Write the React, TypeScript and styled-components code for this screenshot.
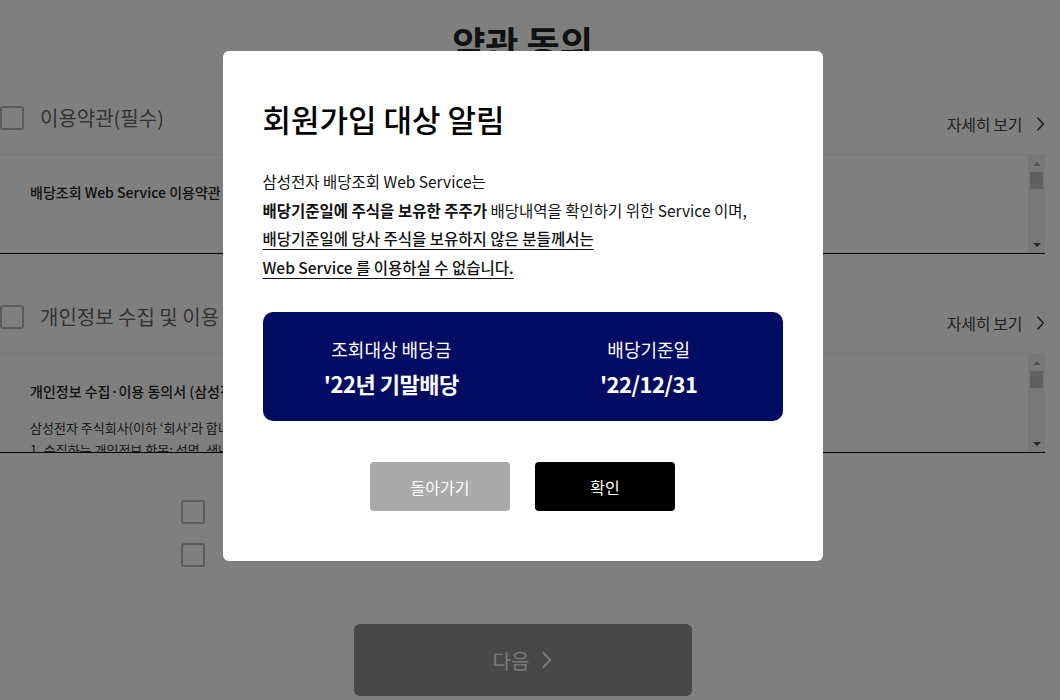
import React from 'react';
import styled, { createGlobalStyle } from 'styled-components';

const GlobalStyle = createGlobalStyle`
  html, body {
    margin: 0;
    padding: 0;
    background: #fff;
    font-family: 'Noto Sans CJK KR', 'Noto Sans', sans-serif;
    color: #222;
  }
  * {
    box-sizing: border-box;
  }
`;

const termsLines = [
  '제1조 (목적)',
  '본 약관은 삼성전자 주식회사가 제공하는 배당조회 Web Service의 이용조건 및 절차에 관한 사항을 규정합니다.',
  '제2조 (용어의 정의)',
  '본 약관에서 사용하는 용어의 정의는 다음과 같습니다.',
  '제3조 (약관의 효력 및 변경)',
  '본 약관은 서비스를 이용하고자 하는 모든 이용자에게 적용됩니다.',
];

const privacyLines = [
  '삼성전자 주식회사(이하 \u2018회사\u2019라 합니다)는 배당조회 Web Service 제공을 위하여 아래와 같이 개인정보를 수집·이용합니다.',
  '1. 수집하는 개인정보 항목: 성명, 생년월일, 휴대전화번호, 증권계좌 정보',
  '2. 개인정보의 수집·이용 목적: 주주 본인 확인 및 배당내역 조회',
  '3. 개인정보의 보유 및 이용 기간: 회원 탈퇴 시까지',
];

const ChevronRight = ({ size = 16, color = 'currentColor' }: { size?: number; color?: string }) => (
  <svg width={size * 0.55} height={size} viewBox="0 0 9 16" fill="none">
    <path d="M1.5 1.5 L7.5 8 L1.5 14.5" stroke={color} strokeWidth="1.6" />
  </svg>
);

const FakeScrollbar = () => (
  <ScrollBar>
    <ArrowButton>
      <Arrow dir="up" />
    </ArrowButton>
    <Track>
      <Thumb />
    </Track>
    <ArrowButton>
      <Arrow dir="down" />
    </ArrowButton>
  </ScrollBar>
);

const App = () => {
  return (
    <>
      <GlobalStyle />
      <Page>
        <PageTitle>약관 동의</PageTitle>

        <Sections>
          <section>
            <SectionHead>
              <HeadLeft>
                <CheckBox />
                <HeadLabel>이용약관(필수)</HeadLabel>
              </HeadLeft>
              <DetailLink>
                자세히 보기
                <ChevronRight size={16} />
              </DetailLink>
            </SectionHead>
            <ScrollBox>
              <BoxContent>
                <BoxTitle spacing={70}>배당조회 Web Service 이용약관</BoxTitle>
                {termsLines.map((line) => (
                  <BoxLine key={line}>{line}</BoxLine>
                ))}
              </BoxContent>
              <FakeScrollbar />
            </ScrollBox>
          </section>

          <section>
            <SectionHead>
              <HeadLeft>
                <CheckBox />
                <HeadLabel>개인정보 수집 및 이용 동의(필수)</HeadLabel>
              </HeadLeft>
              <DetailLink>
                자세히 보기
                <ChevronRight size={16} />
              </DetailLink>
            </SectionHead>
            <ScrollBox>
              <BoxContent>
                <BoxTitle spacing={16}>개인정보 수집·이용 동의서 (삼성전자 주식회사 배당조회 Web Service)</BoxTitle>
                {privacyLines.map((line) => (
                  <BoxLine key={line}>{line}</BoxLine>
                ))}
              </BoxContent>
              <FakeScrollbar />
            </ScrollBox>
          </section>
        </Sections>

        <AgreeList>
          <AgreeRow>
            <CheckBox />
            <AgreeText>위 약관에 모두 동의합니다.</AgreeText>
          </AgreeRow>
          <AgreeRow>
            <CheckBox />
            <AgreeText>만 14세 이상입니다.</AgreeText>
          </AgreeRow>
        </AgreeList>

        <NextButton type="button">
          다음
          <ChevronRight size={20} />
        </NextButton>
      </Page>

      <Overlay>
        <Modal>
          <ModalTitle>회원가입 대상 알림</ModalTitle>
          <ModalText>
            <p>삼성전자 배당조회 Web Service는</p>
            <p>
              <strong>배당기준일에 주식을 보유한 주주가</strong> 배당내역을 확인하기 위한 Service 이며,
            </p>
            <p>
              <Underlined>배당기준일에 당사 주식을 보유하지 않은 분들께서는</Underlined>
            </p>
            <p>
              <Underlined>Web Service 를 이용하실 수 없습니다.</Underlined>
            </p>
          </ModalText>

          <InfoCard>
            <InfoCol>
              <InfoLabel>조회대상 배당금</InfoLabel>
              <InfoValue>'22년 기말배당</InfoValue>
            </InfoCol>
            <InfoCol>
              <InfoLabel>배당기준일</InfoLabel>
              <InfoValue>'22/12/31</InfoValue>
            </InfoCol>
          </InfoCard>

          <ButtonRow>
            <ModalButton type="button" variant="cancel">
              돌아가기
            </ModalButton>
            <ModalButton type="button" variant="confirm">
              확인
            </ModalButton>
          </ButtonRow>
        </Modal>
      </Overlay>
    </>
  );
};

export default App;

const Page = styled.div`
  width: 1045px;
  padding-top: 20px;
`;

const PageTitle = styled.h1`
  margin: 0 0 42px;
  font-size: 36px;
  line-height: 44px;
  font-weight: 700;
  text-align: center;
  color: #222;
`;

const Sections = styled.div`
  display: flex;
  flex-direction: column;
  gap: 51px;
  margin-bottom: 47px;
`;

const SectionHead = styled.div`
  display: flex;
  justify-content: space-between;
  align-items: flex-start;
  height: 24px;
  margin-bottom: 24px;
`;

const HeadLeft = styled.div`
  display: flex;
  align-items: center;
  gap: 16px;
`;

const CheckBox = styled.span`
  display: block;
  flex: none;
  width: 24px;
  height: 24px;
  border: 2px solid #b6b6b6;
  border-radius: 3px;
  background: #fff;
`;

const HeadLabel = styled.span`
  font-size: 20px;
  line-height: 24px;
  color: #666;
`;

const DetailLink = styled.a`
  display: flex;
  align-items: center;
  gap: 14px;
  margin-top: 8px;
  font-size: 16px;
  line-height: 20px;
  letter-spacing: -0.3px;
  color: #444;
  cursor: pointer;
`;

const ScrollBox = styled.div`
  display: flex;
  height: 100px;
  border-top: 1px solid #f0f0f0;
  border-bottom: 1px solid #000;
  background: #fefefe;
`;

const BoxContent = styled.div`
  flex: 1;
  min-width: 0;
  overflow: hidden;
  padding: 27px 30px 0;
`;

const BoxTitle = styled.p<{ spacing: number }>`
  margin: 0 0 ${({ spacing }) => spacing}px;
  font-size: 14px;
  line-height: 20px;
  font-weight: 500;
  color: #222;
  white-space: nowrap;
`;

const BoxLine = styled.p`
  margin: 0;
  font-size: 13px;
  line-height: 22px;
  color: #333;
  white-space: nowrap;
`;

const ScrollBar = styled.div`
  display: flex;
  flex-direction: column;
  width: 17px;
  flex: none;
  background: #f1f1f1;
`;

const ArrowButton = styled.div`
  display: flex;
  align-items: center;
  justify-content: center;
  height: 17px;
  flex: none;
`;

const Arrow = styled.span<{ dir: 'up' | 'down' }>`
  width: 0;
  height: 0;
  border-left: 4px solid transparent;
  border-right: 4px solid transparent;
  ${({ dir }) =>
    dir === 'up' ? 'border-bottom: 4px solid #a3a3a3;' : 'border-top: 4px solid #505050;'}
`;

const Track = styled.div`
  flex: 1;
`;

const Thumb = styled.div`
  height: 17px;
  margin: 0 2px;
  background: #c1c1c1;
`;

const AgreeList = styled.div`
  width: 683px;
  margin: 0 auto 57px;
  display: flex;
  flex-direction: column;
  gap: 19px;
`;

const AgreeRow = styled.div`
  display: flex;
  align-items: flex-start;
  gap: 22px;
`;

const AgreeText = styled.span`
  font-size: 14px;
  line-height: 16px;
  color: #444;
`;

const NextButton = styled.button`
  display: flex;
  align-items: center;
  justify-content: center;
  gap: 12px;
  width: 338px;
  height: 72px;
  margin: 0 auto;
  border: none;
  border-radius: 6px;
  background: #909090;
  color: #f4f4f4;
  font-family: inherit;
  font-size: 20px;
`;

const Overlay = styled.div`
  position: fixed;
  inset: 0;
  display: flex;
  justify-content: center;
  align-items: flex-start;
  padding: 51px 15px 0 0;
  background: rgba(0, 0, 0, 0.5);
`;

const Modal = styled.div`
  width: 600px;
  padding: 50px 40px 50px;
  border-radius: 6px;
  background: #fff;
`;

const ModalTitle = styled.h2`
  margin: 0 0 30px;
  font-size: 31px;
  line-height: 36px;
  font-weight: 500;
  color: #000;
`;

const ModalText = styled.div`
  font-size: 15.5px;
  line-height: 28.5px;
  color: #111;

  p {
    margin: 0;
    white-space: nowrap;
  }

  strong {
    font-weight: 700;
  }
`;

const Underlined = styled.span`
  font-weight: 500;
  text-decoration: underline;
  text-decoration-thickness: 1px;
  text-underline-offset: 4px;
`;

const InfoCard = styled.div`
  display: grid;
  grid-template-columns: 1fr 1fr;
  margin-top: 31px;
  padding: 24px 5px 21px 0;
  border-radius: 10px;
  background: #020c62;
  color: #fff;
`;

const InfoCol = styled.div`
  display: flex;
  flex-direction: column;
  align-items: center;
  gap: 4px;
`;

const InfoLabel = styled.span`
  font-size: 18px;
  line-height: 26px;
`;

const InfoValue = styled.span`
  font-size: 22px;
  line-height: 34px;
  font-weight: 700;
  letter-spacing: -0.5px;
`;

const ButtonRow = styled.div`
  display: flex;
  justify-content: center;
  gap: 25px;
  margin-top: 41px;
`;

const ModalButton = styled.button<{ variant: 'cancel' | 'confirm' }>`
  width: 140px;
  height: 49px;
  border: none;
  border-radius: 4px;
  font-family: inherit;
  font-size: 16px;
  color: #fff;
  background: ${({ variant }) => (variant === 'confirm' ? '#000' : '#aaaaaa')};
  cursor: pointer;
`;
